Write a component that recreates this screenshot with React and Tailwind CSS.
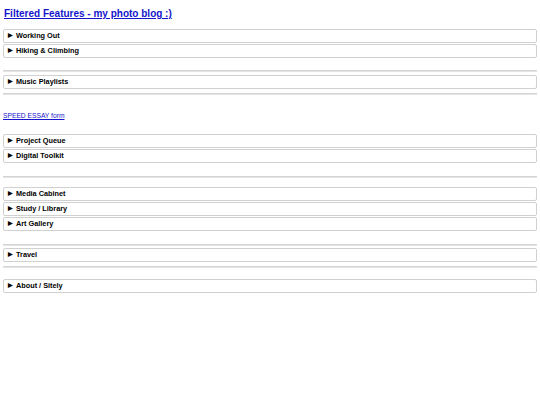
import React from "react";

function Box({ label, className = "" }) {
  return (
    <div
      className={`h-[14px] border border-[#d0d0d0] rounded-[2px] flex items-center pl-[4px] gap-[3px] text-[7.3px] font-bold text-black ${className}`}
    >
      <span className="text-[5.5px] leading-none">▶</span>
      <span>{label}</span>
    </div>
  );
}

function Rule({ className = "" }) {
  return <div className={`h-[2px] bg-[#e4e4e4] border-t border-[#d4d4d4] ${className}`} />;
}

export default function App() {
  return (
    <div
      className="w-[540px] h-[405px] bg-white px-[3px] flex flex-col"
      style={{ fontFamily: '"Liberation Sans", Arial, sans-serif' }}
    >
      <h1 className="mt-[7px] ml-[1px] text-[10px] font-bold leading-[13px]">
        <a href="#" className="text-[#1414cc] underline">
          Filtered Features - my photo blog :)
        </a>
      </h1>

      <div className="mt-[9px] flex flex-col gap-[1px]">
        <Box label="Working Out" />
        <Box label="Hiking & Climbing" />
      </div>

      <Rule className="mt-[12px]" />
      <Box label="Music Playlists" className="mt-[3px]" />
      <Rule className="mt-[4px]" />

      <a href="#" className="mt-[17px] text-[6.7px] text-[#1414cc] underline leading-[8px] self-start">
        SPEED ESSAY form
      </a>

      <div className="mt-[14px] flex flex-col gap-[1px]">
        <Box label="Project Queue" />
        <Box label="Digital Toolkit" />
      </div>

      <Rule className="mt-[13px]" />

      <div className="mt-[9px] flex flex-col gap-[1px]">
        <Box label="Media Cabinet" />
        <Box label="Study / Library" />
        <Box label="Art Gallery" />
      </div>

      <Rule className="mt-[13px]" />
      <Box label="Travel" className="mt-[2px]" />
      <Rule className="mt-[4px]" />
      <Box label="About / Sitely" className="mt-[11px]" />
    </div>
  );
}
